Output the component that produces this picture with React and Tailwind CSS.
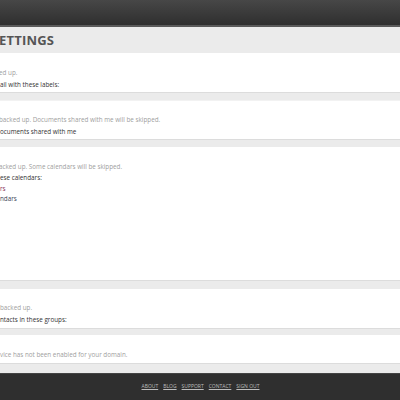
export default function App() {
  const f = { fontFamily: '"Open Sans", "Liberation Sans", sans-serif' };
  return (
    <div className="w-[400px] h-[400px] overflow-hidden flex flex-col bg-[#ebebeb]" style={f}>
      <div className="h-[25px] bg-gradient-to-b from-[#474747] to-[#2f2f2f] shrink-0" />
      <div className="h-[2px] bg-[#5a5a5a] shrink-0" />
      <div className="h-[26px] shrink-0 flex items-center bg-[#ebebeb]">
        <h1 className="text-[13px] font-bold text-[#555] tracking-[0.2px] leading-none -ml-[1px] pt-[1px]">ETTINGS</h1>
      </div>

      <div className="h-[40px] shrink-0 bg-white border-b border-[#dcdcdc] flex flex-col pt-[16px] gap-[4px] text-[6.3px] leading-[8px] whitespace-nowrap">
        <div className="text-[#a0a0a0] -ml-[1px]">ed up.</div>
        <div className="text-[#333]">ail with these labels:</div>
      </div>
      <div className="h-[7px] shrink-0" />

      <div className="h-[40px] shrink-0 bg-white border-b border-[#dcdcdc] border-t border-t-[#f2f2f2] flex flex-col pt-[15px] gap-[4px] text-[6.3px] leading-[8px] whitespace-nowrap">
        <div className="text-[#a0a0a0] -ml-[1px]">backed up. Documents shared with me will be skipped.</div>
        <div className="text-[#333]">ocuments shared with me</div>
      </div>
      <div className="h-[7px] shrink-0" />

      <div className="h-[134px] shrink-0 bg-white border-b border-[#dcdcdc] flex flex-col pt-[16px] gap-[3px] text-[6.3px] leading-[8px] whitespace-nowrap">
        <div className="text-[#a0a0a0] -ml-[1px]">acked up. Some calendars will be skipped.</div>
        <div className="text-[#333]">ese calendars:</div>
        <div className="text-[#8a3358]">rs</div>
        <div className="text-[#3a3f55] -mt-[1px]">ndars</div>
      </div>
      <div className="h-[8px] shrink-0" />

      <div className="h-[40px] shrink-0 bg-white border-b border-[#dcdcdc] flex flex-col pt-[15px] gap-[4px] text-[6.3px] leading-[8px] whitespace-nowrap">
        <div className="text-[#a0a0a0]">backed up.</div>
        <div className="text-[#333]">ntacts in these groups:</div>
      </div>
      <div className="h-[6px] shrink-0" />

      <div className="h-[29px] shrink-0 bg-white border-b border-[#dcdcdc] flex flex-col pt-[16px] text-[6.3px] leading-[8px] whitespace-nowrap">
        <div className="text-[#a0a0a0]">vice has not been enabled for your domain.</div>
      </div>
      <div className="h-[9px] shrink-0" />

      <div className="flex-1 bg-[#2f2f2f] border-t border-[#444] flex items-center justify-center pb-[1px]">
        <div className="flex gap-[5px] text-[5px] text-[#bdbdbd] underline leading-none pl-[1px]">
          <span>ABOUT</span>
          <span>BLOG</span>
          <span>SUPPORT</span>
          <span>CONTACT</span>
          <span>SIGN OUT</span>
        </div>
      </div>
    </div>
  );
}
